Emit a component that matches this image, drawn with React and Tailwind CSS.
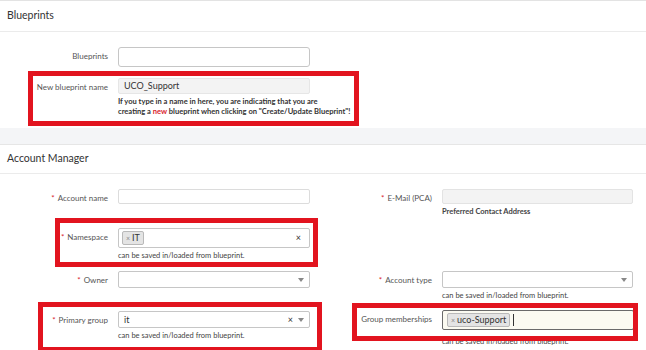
import React from 'react';

// annotation frame drawn over the form
function Mark({ className }) {
  return <div className={`pointer-events-none absolute border-[5px] border-[#e2141f] ${className}`} />;
}

function Label({ children, req }) {
  return (
    <div className="w-[108px] shrink-0 pt-[4px] text-right text-[8px] leading-[10px] text-[#555]">
      {req && <span className="mr-[3px] text-[#d9232d]">*</span>}
      {children}
    </div>
  );
}

function Arrow() {
  return (
    <svg width="6" height="4" viewBox="0 0 6 4" className="ml-[5px]">
      <path d="M0 0 L6 0 L3 4 Z" fill="#888" />
    </svg>
  );
}

function Help({ children, className = '' }) {
  return <div className={`mt-[3px] text-[7.5px] leading-[10px] text-[#444] ${className}`}>{children}</div>;
}

function Tag({ children }) {
  return (
    <span className="flex h-[14px] items-center rounded-[2px] border border-[#b9b9b9] bg-[#e4e4e4] px-[3px] text-[9px] text-[#333]">
      <span className="mr-[2px] text-[7px] text-[#888]">×</span>
      {children}
    </span>
  );
}

export default function App() {
  return (
    <div className="h-[350px] w-[646px] overflow-hidden bg-[#f4f5f7] font-['Lato',sans-serif]">
      {/* Blueprints */}
      <section className="h-[128px] border-t border-[#e3e3e3] bg-white">
        <div className="flex h-[31px] items-center border-b border-[#ebebeb] pl-[7px] text-[10.5px] text-[#333]">
          Blueprints
        </div>
        <div className="flex pt-[15px]">
          <Label>Blueprints</Label>
          <div className="ml-[10px] h-[20px] w-[192px] rounded-[3px] border border-[#c6c6c6] bg-white" />
        </div>
        <div className="relative mt-[11px] flex">
          <Mark className="-top-[7px] left-[28px] h-[55px] w-[331px]" />
          <Label>New blueprint name</Label>
          <div className="ml-[10px]">
            <div className="flex h-[16px] w-[192px] items-center rounded-[2px] border border-[#e6e6e6] bg-[#f3f3f3] px-[5px] text-[9px] text-[#333]">
              UCO_Support
            </div>
            <div className="mt-[3px] whitespace-nowrap text-[7.55px] font-bold leading-[10px] text-[#333]">
              If you type in a name in here, you are indicating that you are
              <br />
              creating a <span className="text-[#d9232d]">new</span> blueprint when clicking on "Create/Update Blueprint"!
            </div>
          </div>
        </div>
      </section>

      {/* Account Manager */}
      <section className="mt-[16px] h-[206px] border-t border-[#e6e6e6] bg-white">
        <div className="flex h-[29px] items-center border-b border-[#ebebeb] pl-[7px] text-[10.5px] text-[#333]">
          Account Manager
        </div>

        <div className="grid grid-cols-[324px_1fr] pt-[15px]">
          <div className="flex">
            <Label req>Account name</Label>
            <div className="ml-[10px] h-[15px] w-[192px] rounded-[2px] border border-[#dcdcdc] bg-white" />
          </div>
          <div className="flex">
            <Label req>E-Mail (PCA)</Label>
            <div className="ml-[10px]">
              <div className="h-[15px] w-[191px] rounded-[2px] border border-[#e3e3e3] bg-[#f3f3f3]" />
              <Help className="font-bold">Preferred Contact Address</Help>
            </div>
          </div>
        </div>

        <div className="relative mt-[11px] grid grid-cols-[324px_1fr]">
          <Mark className="-top-[10px] left-[55px] h-[49px] w-[263px]" />
          <div className="flex">
            <Label req>Namespace</Label>
            <div className="ml-[10px]">
              <div className="flex h-[20px] w-[192px] items-center rounded-[2px] border border-[#c6c6c6] bg-white pl-[3px] pr-[8px]">
                <Tag>IT</Tag>
                <span className="ml-auto text-[9px] text-[#333]">×</span>
              </div>
              <Help>can be saved in/loaded from blueprint.</Help>
            </div>
          </div>
          <div />
        </div>

        <div className="mt-[10px] grid grid-cols-[324px_1fr]">
          <div className="flex">
            <Label req>Owner</Label>
            <div className="ml-[10px] flex h-[17px] w-[192px] items-center justify-end rounded-[2px] border border-[#c6c6c6] bg-white pr-[5px]">
              <Arrow />
            </div>
          </div>
          <div className="flex">
            <Label req>Account type</Label>
            <div className="ml-[10px]">
              <div className="flex h-[17px] w-[191px] items-center justify-end rounded-[2px] border border-[#c6c6c6] bg-white pr-[5px]">
                <Arrow />
              </div>
              <Help>can be saved in/loaded from blueprint.</Help>
            </div>
          </div>
        </div>

        <div className="relative mt-[9px] grid grid-cols-[324px_1fr]">
          <Mark className="-top-[8px] left-[38px] h-[50px] w-[284px]" />
          <Mark className="-top-[7px] left-[352px] h-[38px] w-[286px]" />
          <div className="flex pt-[1px]">
            <Label req>Primary group</Label>
            <div className="ml-[10px]">
              <div className="flex h-[17px] w-[192px] items-center rounded-[2px] border border-[#c6c6c6] bg-white pl-[5px] pr-[5px] text-[9px] text-[#333]">
                it
                <span className="ml-auto text-[9px]">×</span>
                <Arrow />
              </div>
              <Help>can be saved in/loaded from blueprint.</Help>
            </div>
          </div>
          <div className="flex">
            <Label>Group memberships</Label>
            <div className="ml-[10px]">
              <div className="flex h-[20px] w-[192px] items-center rounded-[2px] border border-[#6a6a6a] bg-[#fbfaf1] pl-[4px]">
                <Tag>uco-Support</Tag>
                <span className="ml-[3px] h-[12px] w-px bg-[#333]" />
              </div>
              <Help className="mt-[7px]">can be saved in/loaded from blueprint.</Help>
            </div>
          </div>
        </div>
      </section>
    </div>
  );
}
